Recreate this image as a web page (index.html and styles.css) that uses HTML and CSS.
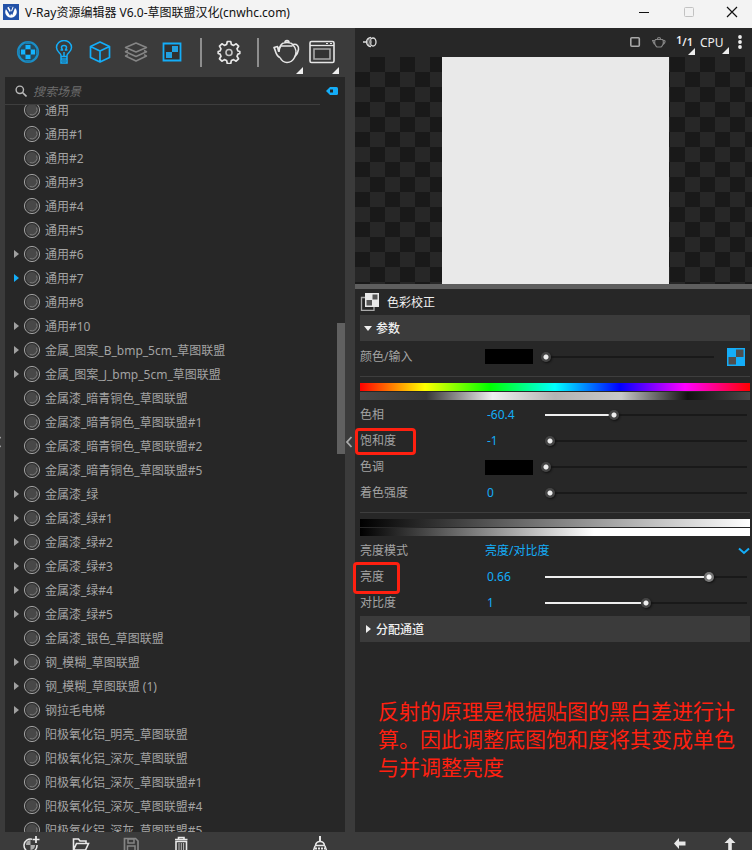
FILE: index.html
```html
<!DOCTYPE html>
<html lang="zh-CN">
<head>
<meta charset="utf-8">
<title>V-Ray资源编辑器</title>
<link rel="stylesheet" href="styles.css">
</head>
<body>
<svg class="defs" aria-hidden="true">
  <symbol id="ball" viewBox="0 0 18 18">
    <circle cx="9" cy="9" r="7.6" fill="#303030" stroke="#a0a0a0"/>
    <circle cx="9" cy="9" r="5.9" fill="#484848"/>
    <path d="M13.6 6.5a5.2 5.2 0 0 1-6.8 7" fill="none" stroke="#777"/>
  </symbol>
  <symbol id="teapot" viewBox="0 0 28 26">
    <path d="M9 6C10 4 12 3.500 15 3.500S20 4 21 6C24 9 25 14 22.500 18.500C21 21.500 18 23.500 15 23.500S9.500 21.500 8 18.500M9 6C7.500 8 6.500 10 6.500 12L5.500 7.500 2 8.500C4 12 3.500 17 8 18.500M7 13C7 10 8 8 9 6.500M9.500 7h11M13 3.500c0-2.500 4-2.500 4 0M21 5.500c4-1 6 2 5.500 5s-1.500 5-3.500 7" fill="none" stroke="currentColor" stroke-width="1.600" stroke-linejoin="round"/>
  </symbol>
</svg>
<div class="window">
  <header class="titlebar">
    <svg class="logo" viewBox="0 0 16 16"><path fill="#2251a8" d="M0 0h16v16H0z"/><circle cx="8" cy="8" r="5.800" fill="#fff"/><path d="M3 3.500l4 6.500 1-2 1 1.500 2.500-6.500" fill="none" stroke="#2251a8" stroke-width="1.700"/><path d="M5.500 2.500L8 7l2-5" fill="#2251a8"/></svg>
    <h1>V-Ray资源编辑器 V6.0-草图联盟汉化(cnwhc.com)</h1>
    <button class="caption" aria-label="最小化"><svg viewBox="0 0 12 12"><path d="M1 6.500h10" stroke="#111"/></svg></button>
    <button class="caption" aria-label="最大化" disabled><svg viewBox="0 0 12 12"><rect x="1.500" y="1.500" width="9" height="9" rx="1" fill="none" stroke="#c2c2c2"/></svg></button>
    <button class="caption" aria-label="关闭"><svg viewBox="0 0 12 12"><path d="M1 1l10 10M11 1L1 11" stroke="#111" stroke-width="1.200"/></svg></button>
  </header>

  <main class="workspace">
    <div class="gutter outer"><button class="fold" aria-label="展开左侧"><svg viewBox="0 0 8 12"><path d="M6.500 1L2 6l4.500 5" fill="none" stroke="#aaa" stroke-width="1.800"/></svg></button></div>
    <section class="assets">
      <nav class="toolbar">
        <button class="tool blue" aria-label="材质"><svg viewBox="0 0 24 24"><circle cx="12" cy="12" r="10" fill="#264a5c" stroke="#1a8fc8" stroke-width="2.200"/><path d="M9.500 5h5v4.500h-5zM9.500 14.500h5V19h-5zM5 9.500h4.500v5H5zM14.500 9.500H19v5h-4.500z" fill="#14b4ff"/><path d="M9.500 1.500h5V4h-5zM9.500 20h5v2.500h-5zM1.500 9.500H4v5H1.500zM20 9.500h2.500v5H20z" fill="#1d7fae"/><path d="M9.500 9.500h5v5h-5z" fill="#303030"/></svg></button>
        <button class="tool blue" aria-label="灯光"><svg viewBox="0 0 24 24"><path d="M9 19v-3.500C9 13 4.500 12 4.500 7.500a7.500 7 0 0 1 15 0C19.500 12 15 13 15 15.500V23H9v-4h6M9 16.500h6M12 12v4M8.500 10h2c0-1-1-1-1-2.500a2.500 2 0 0 1 5 0C14.500 9 13.500 9 13.500 10h2" fill="none" stroke="currentColor" stroke-width="1.500"/><path d="M10 18h4v5h-4z" fill="#1787bf"/></svg></button>
        <button class="tool blue" aria-label="几何体"><svg viewBox="0 0 24 24"><path d="M12 2l9.500 4.500v11L12 22l-9.500-4.500v-11zM2.500 6.500L12 11l9.500-4.500M12 11v11" fill="none" stroke="currentColor" stroke-width="1.700" stroke-linejoin="round"/></svg></button>
        <button class="tool dim" aria-label="渲染元素"><svg viewBox="0 0 24 24"><path d="M12 3l10.500 4.500L12 12 1.500 7.500zM4 10.500l-2.500 1.200L12 16.500l10.500-4.800L20 10.500M4 14.700l-2.500 1.300L12 21l10.500-5L20 14.700" fill="none" stroke="currentColor" stroke-width="1.500" stroke-linejoin="round"/></svg></button>
        <button class="tool blue" aria-label="纹理"><svg viewBox="0 0 24 24"><path d="M3.500 3.500h17v17h-17z" fill="#303030" stroke="currentColor" stroke-width="1.800"/><path d="M12 6h6v6h-6zM6 12h6v6H6z" fill="#22a0e0"/></svg></button>
        <span class="bar"></span>
        <button class="tool" aria-label="设置"><svg viewBox="0 0 24 24"><path d="M10.300 1.500h3.400l.7 3 2.200.9 2.600-1.600 2.400 2.400L20 8.800l.9 2.200 1.900.5v2l-1.900.6-.9 2.200 1.500 2.500-2.400 2.400-2.500-1.600-2.200.9-.7 3h-3.400l-.7-3-2.200-.9-2.500 1.600-2.400-2.400L4 16.300l-.9-2.200-1.900-.6v-2l1.900-.5L4 8.800 2.500 6.200l2.400-2.400 2.500 1.600 2.200-.9z" fill="none" stroke="currentColor" stroke-width="1.700" stroke-linejoin="round"/><circle cx="12" cy="12.500" r="3" fill="none" stroke="currentColor" stroke-width="1.600" opacity=".8"/></svg></button>
        <span class="bar"></span>
        <button class="tool menu" aria-label="渲染"><svg class="wide"><use href="#teapot"/></svg></button>
        <button class="tool menu" aria-label="帧缓冲"><svg class="wide" viewBox="0 0 28 26"><rect x="2" y="2.500" width="24" height="21" rx="1.500" fill="none" stroke="currentColor" stroke-width="1.600"/><path d="M2 6.500h24" stroke="currentColor" stroke-width="1.300"/><path d="M18 4.500h2M22 4.500h2" stroke="currentColor"/><path d="M6 10h16v10H6z" fill="#333" stroke="#a8a8a8" stroke-width="1.600"/></svg></button>
      </nav>
      <div class="browser">
        <div class="search">
          <label for="q" aria-label="搜索"><svg viewBox="0 0 12 12"><circle cx="4.800" cy="4.800" r="3.700" fill="none" stroke="#b8b8b8" stroke-width="1.400"/><path d="M7.500 7.500l4 4" stroke="#b8b8b8" stroke-width="1.600"/></svg></label>
          <input id="q" type="text" placeholder="搜索场景">
          <button class="tag" aria-label="标签过滤"><svg viewBox="0 0 12 8"><path d="M4 0h6.500Q12 0 12 1.500v5Q12 8 10.500 8H4L0 4z" fill="#14adf8"/><path d="M4 2.500h3v3H4z" fill="#272727"/></svg></button>
        </div>
        <div class="scroll">
        <ul class="tree">
          <li><svg><use href="#ball"/></svg>通用</li>
          <li><svg><use href="#ball"/></svg>通用#1</li>
          <li><svg><use href="#ball"/></svg>通用#2</li>
          <li><svg><use href="#ball"/></svg>通用#3</li>
          <li><svg><use href="#ball"/></svg>通用#4</li>
          <li><svg><use href="#ball"/></svg>通用#5</li>
          <li class="parent"><svg><use href="#ball"/></svg>通用#6</li>
          <li class="parent active"><svg><use href="#ball"/></svg>通用#7</li>
          <li><svg><use href="#ball"/></svg>通用#8</li>
          <li class="parent"><svg><use href="#ball"/></svg>通用#10</li>
          <li class="parent"><svg><use href="#ball"/></svg>金属_图案_B_bmp_5cm_草图联盟</li>
          <li class="parent"><svg><use href="#ball"/></svg>金属_图案_J_bmp_5cm_草图联盟</li>
          <li><svg><use href="#ball"/></svg>金属漆_暗青铜色_草图联盟</li>
          <li><svg><use href="#ball"/></svg>金属漆_暗青铜色_草图联盟#1</li>
          <li><svg><use href="#ball"/></svg>金属漆_暗青铜色_草图联盟#2</li>
          <li><svg><use href="#ball"/></svg>金属漆_暗青铜色_草图联盟#5</li>
          <li class="parent"><svg><use href="#ball"/></svg>金属漆_绿</li>
          <li class="parent"><svg><use href="#ball"/></svg>金属漆_绿#1</li>
          <li class="parent"><svg><use href="#ball"/></svg>金属漆_绿#2</li>
          <li class="parent"><svg><use href="#ball"/></svg>金属漆_绿#3</li>
          <li class="parent"><svg><use href="#ball"/></svg>金属漆_绿#4</li>
          <li class="parent"><svg><use href="#ball"/></svg>金属漆_绿#5</li>
          <li><svg><use href="#ball"/></svg>金属漆_银色_草图联盟</li>
          <li class="parent"><svg><use href="#ball"/></svg>钢_模糊_草图联盟</li>
          <li class="parent"><svg><use href="#ball"/></svg>钢_模糊_草图联盟 (1)</li>
          <li class="parent"><svg><use href="#ball"/></svg>钢拉毛电梯</li>
          <li><svg><use href="#ball"/></svg>阳极氧化铝_明亮_草图联盟</li>
          <li><svg><use href="#ball"/></svg>阳极氧化铝_深灰_草图联盟</li>
          <li><svg><use href="#ball"/></svg>阳极氧化铝_深灰_草图联盟#1</li>
          <li><svg><use href="#ball"/></svg>阳极氧化铝_深灰_草图联盟#4</li>
          <li><svg><use href="#ball"/></svg>阳极氧化铝_深灰_草图联盟#5</li>
        </ul>
        <span class="thumb"></span>
        </div>
      </div>
    </section>
    <div class="gutter"><button class="fold" aria-label="折叠右侧"><svg viewBox="0 0 8 12"><path d="M6.500 1L2 6l4.500 5" fill="none" stroke="#aaa" stroke-width="1.800"/></svg></button></div>
    <section class="detail">
      <div class="viewbar">
        <button class="vb knob" aria-label="预览场景"><svg viewBox="0 0 14 12"><path d="M0 6h3" stroke="#ddd" stroke-width="1.500"/><path d="M8 1.500A4.500 4.500 0 1 0 8 10.500" fill="none" stroke="#ddd" stroke-width="1.300"/><ellipse cx="10" cy="6" rx="3" ry="4" fill="none" stroke="#ddd" stroke-width="1.300"/><ellipse cx="6.500" cy="6" rx="1.800" ry="3" fill="none" stroke="#aaa"/></svg></button>
        <button class="vb stop" aria-label="停止"><svg viewBox="0 0 14 12"><rect x="2.800" y="1.800" width="8.500" height="8.500" rx="1" fill="none" stroke="#a8a8a8" stroke-width="1.600"/></svg></button>
        <button class="vb pot" aria-label="预览渲染"><svg viewBox="0 0 14 12"><path d="M3.500 3.500h7c1.500 2 1 5.500-1.500 7.500H5C2.500 9 2 5.500 3.500 3.500zM5.500 3c0-2 3-2 3 0M3 8.500C1.500 8 1.500 5.500.5 4.500h2M11 4.500c2.500-.5 3 1.500 0 4" fill="none" stroke="currentColor" stroke-width="1.200"/></svg></button>
        <button class="vb ratio menu" aria-label="1/1"><span>1</span><span>/</span><span>1</span></button>
        <button class="vb cpu menu">CPU</button>
        <button class="vb more" aria-label="更多"><svg viewBox="0 0 4 14"><circle cx="2" cy="2" r="1.900" fill="#eee"/><circle cx="2" cy="7" r="1.900" fill="#eee"/><circle cx="2" cy="12" r="1.900" fill="#eee"/></svg></button>
      </div>
      <div class="preview"><div class="swatch-render"></div></div>
      <h2 class="asset-title"><svg viewBox="0 0 20 20"><path d="M1.500 5.500H14v12.800H1.500z" fill="none" stroke="#aaa" stroke-width="1.300"/><path d="M5 1h14v14H5z" fill="#e8e8e8"/><path d="M12.500 2.500h5v5h-5zM6.500 8h5.500v5.500H6.500z" fill="#555"/></svg>色彩校正</h2>
      <form class="params">
        <button type="button" class="group open">参数</button>
        <div class="row first">
          <label for="color">颜色/输入</label><button type="button" class="chip" aria-label="颜色"></button>
          <input class="from-chip" id="color" type="range" min="0" max="100" value="0" style="--v:0">
          <button type="button" class="texture" aria-label="纹理贴图"><svg viewBox="0 0 18 18"><path d="M0 0h18v18H0z" fill="#14adf8"/><path d="M9 1.500h7.500V9H9zM1.500 9H9v7.500H1.500z" fill="#4e4e4e"/></svg></button>
        </div>
        <hr>
        <div class="ramp hue"></div>
        <div class="ramp mapped"></div>
        <div class="rows">
          <div class="row"><label for="hue">色相</label><output>-60.4</output><input id="hue" type="range" min="-180" max="180" step="0.1" value="-60.4" style="--v:.332"></div>
          <div class="row"><label class="mark saturation" for="sat">饱和度</label><output>-1</output><input id="sat" type="range" min="-1" max="1" step="0.01" value="-1" style="--v:0"></div>
          <div class="row"><label for="tint">色调</label><button type="button" class="chip" aria-label="色调颜色"></button><input class="from-chip" id="tint" type="range" min="0" max="100" value="0" style="--v:0"></div>
          <div class="row"><label for="strength">着色强度</label><output>0</output><input id="strength" type="range" min="0" max="1" step="0.01" value="0" style="--v:0"></div>
        </div>
        <hr>
        <div class="ramp gray"></div>
        <div class="ramp bright"></div>
        <div class="rows">
          <div class="row"><label for="mode">亮度模式</label><span class="pick"><select id="mode"><option>亮度/对比度</option></select><svg viewBox="0 0 12 8"><path d="M1 1.500l5 4.500 5-4.500" fill="none" stroke="#14adf8" stroke-width="2"/></svg></span></div>
          <div class="row"><label class="mark brightness" for="bri">亮度</label><output>0.66</output><input class="hot" id="bri" type="range" min="-1" max="1" step="0.01" value="0.66" style="--v:.83"></div>
          <div class="row"><label for="con">对比度</label><output>1</output><input id="con" type="range" min="0" max="2" step="0.01" value="1" style="--v:.5"></div>
        </div>
        <button type="button" class="group">分配通道</button>
      </form>
      <p class="note">反射的原理是根据贴图的黑白差进行计算。因此调整底图饱和度将其变成单色与并调整亮度</p>
    </section>
  </main>

  <footer class="actions">
    <button aria-label="新建材质"><svg viewBox="0 0 18 18"><path d="M10 3.200A6.500 6.500 0 1 0 15 9" fill="none" stroke="#e8e8e8" stroke-width="1.500"/><path d="M8.500 4v5H4a5 5 0 0 1 4.500-5zM8.500 9H13a5 5 0 0 1-4.500 5z" fill="#aaa"/><path d="M14 0v7M10.500 3.500h7" stroke="#eee" stroke-width="1.700"/></svg></button>
    <button aria-label="打开"><svg viewBox="0 0 18 18"><path d="M1.500 14V3h5l1.500 2h6v2.500M1.500 14l3-6.500h12L13.500 14z" fill="none" stroke="#e8e8e8" stroke-width="1.600"/></svg></button>
    <button aria-label="保存" disabled><svg viewBox="0 0 18 18"><path d="M2.500 2.500h11l2.500 2.500v10.500H2.500z" fill="none" stroke="#858585" stroke-width="1.700"/><path d="M6 3h6v4H6zM5.500 10h7.500v5H5.500z" fill="none" stroke="#858585" stroke-width="1.500"/></svg></button>
    <button aria-label="删除"><svg viewBox="0 0 18 18"><path d="M3 3.500h12.500M6.500 3V1.500H12V3M4 5.500h10.500V16H4z" fill="none" stroke="#e8e8e8" stroke-width="1.600"/><path d="M7 7v7M9.300 7v7M11.600 7v7" stroke="#bbb"/></svg></button>
    <button class="purge" aria-label="清理"><svg viewBox="0 0 18 18"><path d="M9 0v5" stroke="#e8e8e8" stroke-width="2"/><path d="M4.500 9.500Q5 5.500 9 5.500t4.500 4zM4 10l-2 6h14l-2-6" fill="none" stroke="#e8e8e8" stroke-width="1.500"/><path d="M4 12.500h10" stroke="#e8e8e8" stroke-width="2" stroke-dasharray="2 1"/></svg></button>
    <button class="back" aria-label="后退"><svg viewBox="0 0 18 18"><path d="M3 7.500L8 2v3.500h6.500v4H8V13z" fill="#e8e8e8"/></svg></button>
    <button class="up" aria-label="向上"><svg viewBox="0 0 18 18"><path d="M9 1.500L14.500 7h-3.700v7H7.200V7H3.500z" fill="#e8e8e8"/></svg></button>
  </footer>
</div>
</body>
</html>
```

FILE: styles.css
```css
*, *::before, *::after { box-sizing: border-box; }

body {
  margin: 0;
  font: 12px/24px "Noto Sans", "Noto Sans CJK SC", sans-serif;
  color: #a3a3a3;
  background: #3b3b3b;
}

h1, h2, p, ul { margin: 0; padding: 0; font-size: 12px; font-weight: 400; }
svg { display: block; flex: none; }
.defs { position: absolute; width: 0; height: 0; }

button, input, select {
  margin: 0;
  padding: 0;
  border: 0;
  background: none;
  color: inherit;
  font: inherit;
}

.window { display: flex; flex-direction: column; height: 100vh; overflow: hidden; }

/* Title bar */
.titlebar { display: flex; align-items: center; height: 28px; padding: 0 0 4px 3px; background: #f3f3f3; color: #111; }
.logo { width: 16px; height: 16px; }
.titlebar h1 { flex: 1; margin-left: 6px; padding-top: 2px; white-space: nowrap; }
.caption { display: grid; place-items: center; width: 46px; height: 24px; }
.caption:last-child { width: 40px; }
.caption:nth-of-type(1) { margin-right: -1px; }
.caption svg { width: 12px; height: 12px; }

.workspace { display: flex; flex: 1; min-height: 0; }
.gutter { display: flex; align-items: center; width: 10px; overflow: hidden; }
.gutter.outer { width: 5px; justify-content: flex-end; }
.fold { width: 10px; flex: none; margin-top: 24px; }
.outer .fold { margin-right: 1px; }
.fold svg { width: 8px; height: 12px; }

/* Asset list */
.assets { display: flex; flex-direction: column; flex: 340 1 0; min-width: 0; }
.toolbar { display: flex; align-items: center; height: 49px; padding-left: 5px; color: #e6e6e6; }
.tool { position: relative; display: grid; place-items: center; flex: none; width: 36px; height: 46px; padding-bottom: 2px; }
.tool svg { width: 24px; height: 24px; }
.tool svg.wide { width: 28px; height: 26px; }
.blue { color: #14adf8; }
.dim { color: #858585; }
.bar { display: flex; justify-content: center; width: 21px; }
.bar::before { content: ""; width: 2px; height: 29px; background: #8e8e8e; }
.menu::after {
  content: "";
  position: absolute;
  right: 0;
  bottom: 2px;
  border: solid transparent;
  border-width: 0 0 7px 7px;
  border-bottom-color: #eee;
}
.tool.menu::after { right: 1px; }

.browser { display: flex; flex-direction: column; flex: 1; min-height: 0; background: #272727; }
.search { display: flex; align-items: center; height: 28px; padding-right: 7px; }
.search label { display: grid; place-items: center; align-self: stretch; width: 28px; padding-left: 4px; border-bottom: 1px solid #3e3e3e; }
.search label svg { width: 12px; height: 12px; }
.search input { flex: 1; min-width: 0; height: 28px; padding-top: 2px; border-bottom: 1px solid #3e3e3e; font-style: italic; outline: 0; }
.search input::placeholder { color: #6c6c6c; }
.tag { margin-left: 6px; }
.tag svg { width: 12px; height: 8px; }

.scroll { position: relative; flex: 1; min-height: 0; overflow: hidden; }
.tree { margin-top: -7px; list-style: none; }
.tree li { display: flex; align-items: center; height: 24px; gap: 4px; padding: 2px 0 0 18px; white-space: nowrap; }
.tree svg { width: 18px; height: 18px; margin-bottom: 2px; }
.tree .parent { gap: 4px; padding-left: 8px; }
.tree .parent::before { content: ""; margin: 0 0 2px 1px; border: solid transparent; border-width: 4px 0 4px 5px; border-left-color: #a0a0a0; }
.tree .active::before { border-left-color: #14adf8; }
.thumb { position: absolute; right: 0; top: 30%; width: 8px; height: 18%; background: #606060; }

/* Detail panel */
.detail { display: flex; flex-direction: column; flex: 397 1 0; min-width: 0; background: #272727; }
.viewbar { display: flex; align-items: center; height: 29px; padding: 0 10px 0 8px; color: #eee; }
.vb { position: relative; display: flex; align-items: center; height: 28px; flex: none; padding-bottom: 2px; }
.vb svg { width: 14px; height: 12px; }
.knob { margin-right: auto; }
.pot { margin: 0 10px; color: #858585; }
.ratio { width: 19px; font-weight: 600; font-size: 11px; line-height: 12px; margin-right: 5px; }
.ratio span:first-child { margin-bottom: 4px; }
.cpu { width: 29px; padding-top: 2px; margin-right: 9px; }
.cpu::after { bottom: 3px; }
.viewbar .more svg { width: 4px; height: 14px; }

.preview {
  display: flex;
  justify-content: center;
  padding-left: 4px;
  border-bottom: 5px solid #5e5e5e;
  background: conic-gradient(#191919 25%, #272727 0 50%, #191919 0 75%, #272727 0) 0 0 / 30px 30px;
}
.swatch-render { width: 227px; aspect-ratio: 1; background: #e9e9e9; }

.asset-title { display: flex; align-items: center; gap: 7px; height: 26px; padding: 2px 0 0 5px; color: #f0f0f0; }
.asset-title svg { width: 20px; height: 20px; margin-bottom: 2px; }

.params { padding: 0 2px 0 5px; }
.group { display: flex; align-items: center; gap: 4px; width: 100%; height: 26px; padding: 2px 0 0 4px; background: #3b3b3b; color: #f0f0f0; font-weight: 500; }
.group::before { content: ""; margin: 0 1px 2px 2px; border: solid transparent; border-width: 4px 0 4px 5px; border-left-color: #eee; }
.group.open::before { margin: 0 0 2px; border-width: 5px 4px 0; border-color: #eee transparent transparent; }

.row { display: flex; align-items: center; height: 26px; }
.row.first { height: 29px; padding-top: 2px; }
.row label { position: relative; flex: none; width: 125px; }
.row output { flex: none; width: 60px; padding-left: 2px; color: #14adf8; }
.chip { flex: none; width: 48px; height: 15px; margin-right: 8px; background: #000; }
.texture { margin: 0 5px 0 13px; }
.texture svg { width: 18px; height: 18px; }

hr { height: 1px; margin: 6px 0; border: 0; background: #3e3e3e; }
.ramp { height: 8px; }
.ramp + .ramp { margin-top: 1px; }
.rows { padding-top: 2px; }
.hue { background: linear-gradient(90deg, #f00, #ff0, #0f0, #0ff, #00f, #f0f, #f00); }
.mapped { background: linear-gradient(90deg, #484848, #383838 17%, #eee 34%, #b4b4b4 50%, #c8c8c8 67%, #121212 84%, #484848); }
.gray { background: linear-gradient(90deg, #000, #fff); }
.bright { background: linear-gradient(90deg, #000, #fff 60%); }

input[type="range"] { appearance: none; flex: 1; min-width: 0; height: 16px; margin-right: 3px; }
.row.first input[type="range"] { margin-right: 0; }
input[type="range"]::-webkit-slider-runnable-track {
  height: 2px;
  background: linear-gradient(#eee, #eee) 0 0 / calc((100% - 10px) * var(--v)) 100% no-repeat #191919;
}
input[type="range"]::-webkit-slider-thumb {
  appearance: none;
  width: 10px;
  height: 10px;
  margin-top: -4px;
  border-radius: 50%;
  background: radial-gradient(#eee 2px, #444 3px);
  box-shadow: 1px 1px 2px #111;
}
input.hot::-webkit-slider-thumb { background: radial-gradient(#fff 2px, #777 3px); }

.pick { position: relative; flex: 1; display: flex; align-items: center; color: #14adf8; }
.pick select { appearance: none; width: 100%; }
.pick option { color: #222; }
.pick svg { position: absolute; right: 0; width: 12px; height: 8px; pointer-events: none; }

.mark::after { content: ""; position: absolute; border: 3px solid #ff2010; border-radius: 4px; }
.saturation::after { inset: -1px auto auto -5px; width: 61px; height: 27px; }
.brightness::after { inset: -3px auto auto -7px; width: 47px; height: 32px; }

.note { padding: 55px 14px 0 23px; font-size: 21px; line-height: 28px; color: #ff2010; }

/* Bottom actions */
.actions { display: flex; height: 18px; padding: 4px 13px 0 22px; overflow: hidden; }
.actions button { align-self: flex-start; flex: none; margin-right: 32px; }
.actions svg { width: 18px; height: 18px; }
.actions .purge { margin-left: 89px; }
.actions .back { margin-left: auto; }
.actions .up { margin-right: 0; }
```
